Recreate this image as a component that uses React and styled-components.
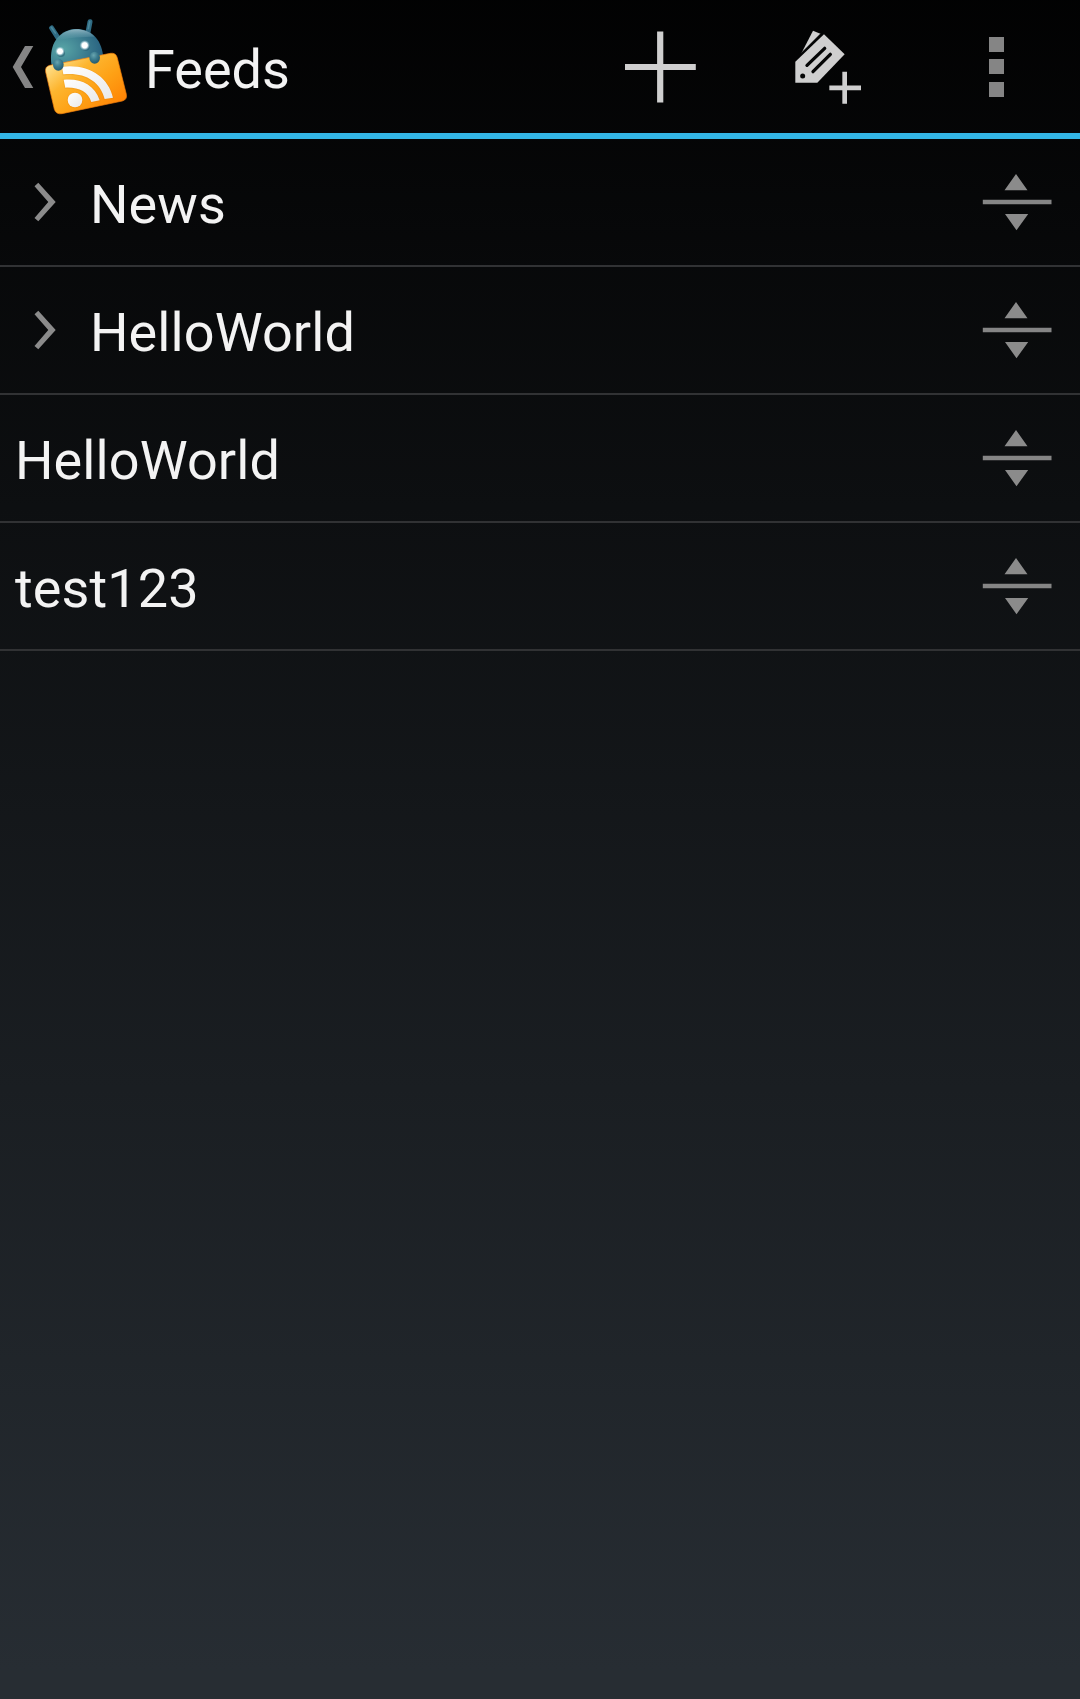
import React from 'react';
import styled, { createGlobalStyle } from 'styled-components';

const GlobalStyle = createGlobalStyle`
  * { box-sizing: border-box; }
  html, body { margin: 0; padding: 0; background: #000; }
`;

const Screen = styled.div`
  display: flex;
  flex-direction: column;
  width: 100%;
  height: 1699px;
  overflow: hidden;
  font-family: Roboto, 'Liberation Sans', sans-serif;
  color: #f3f3f3;
  background: linear-gradient(to bottom, #000 -75px, #272d33 1670px);
`;

const ActionBar = styled.header`
  display: flex;
  align-items: center;
  height: 139px;
  border-bottom: 6px solid #33b5e5;
`;

const HomeButton = styled.button`
  display: flex;
  align-items: center;
  gap: 7px;
  height: 133px;
  padding: 0 0 0 12px;
  border: 0;
  background: none;
`;

const Title = styled.h1`
  flex: 1;
  margin: 0;
  padding: 6px 0 0 12px;
  font-size: 54px;
  font-weight: 400;
  line-height: 64px;
`;

const Action = styled.button`
  display: flex;
  align-items: center;
  justify-content: center;
  width: ${(p) => p.$width}px;
  height: 133px;
  padding: 0;
  border: 0;
  background: none;
`;

const OverflowDots = styled.span`
  display: flex;
  flex-direction: column;
  justify-content: space-between;
  width: 15px;
  height: 60px;
`;

const Dot = styled.i`
  height: 15px;
  background: #858585;
`;

const FeedList = styled.ul`
  margin: 0;
  padding: 0;
  list-style: none;
`;

const Row = styled.li`
  display: flex;
  align-items: center;
  height: 128px;
  padding: 0 28px 0 ${(p) => (p.$folder ? 34 : 15)}px;
  border-bottom: 2px solid #313234;
`;

const Name = styled.span`
  flex: 1;
  padding: 5px 0 0 ${(p) => (p.$folder ? 34 : 0)}px;
  font-size: 54px;
  letter-spacing: 0.1px;
  line-height: 64px;
`;

const Icon = styled.svg`
  display: block;
  flex: none;
`;

const BackIcon = () => (
  <Icon width="22" height="44" viewBox="12 45 22 44">
    <path d="M25 46H33.3L21 67L33.3 88H25L12.7 67Z" fill="#858585" />
  </Icon>
);

const AppLogo = () => (
  <Icon width="92" height="133" viewBox="0 0 276 399">
    <defs>
      <linearGradient id="folder" x1="0" y1="0.05" x2="1" y2=".95">
        <stop offset="0" stopColor="#fff0ae" />
        <stop offset=".35" stopColor="#fdb52f" />
        <stop offset=".6" stopColor="#fea115" />
        <stop offset="1" stopColor="#ff7a00" />
      </linearGradient>
      <radialGradient id="head" cx=".22" cy=".5" r=".8">
        <stop offset="0" stopColor="#58a5a6" />
        <stop offset=".5" stopColor="#3f8192" />
        <stop offset="1" stopColor="#27607f" />
      </radialGradient>
      <linearGradient id="shine" x1="0" y1="0" x2="0" y2="1">
        <stop offset="0" stopColor="#b5d0d8" stopOpacity=".7" />
        <stop offset="1" stopColor="#6ba6b4" stopOpacity="0" />
      </linearGradient>
      <radialGradient id="hand" cx=".4" cy=".3" r=".7">
        <stop offset="0" stopColor="#68a5b0" />
        <stop offset=".5" stopColor="#3c7c8e" />
        <stop offset="1" stopColor="#245b6f" />
      </radialGradient>
      <radialGradient id="glow">
        <stop offset=".5" stopColor="#fff" />
        <stop offset=".68" stopColor="#d0e6ee" stopOpacity=".7" />
        <stop offset="1" stopColor="#7fb4c4" stopOpacity="0" />
      </radialGradient>
      <linearGradient id="wave" x1="0" y1="0" x2="1" y2="1">
        <stop offset="0" stopColor="#fff" />
        <stop offset="1" stopColor="#e9e9ea" />
      </linearGradient>
    </defs>
    <g transform="translate(-123 0)">
      <path d="M155 84L173 112M270 65L264 97" stroke="#2f6b83" strokeWidth="15" strokeLinecap="round" />
      <path d="M154 82L166 99M269 65L265 86" stroke="#4a879b" strokeWidth="5" strokeLinecap="round" />
      <path d="M154 192C148 145 165 100 215 88C262 80 302 108 309 165L290 182L170 210Z" fill="url(#head)" />
      <path d="M168 122C184 96 210 89 228 88C248 88 270 94 284 110C250 110 210 112 168 122Z" fill="url(#shine)" />
      <circle cx="183" cy="159" r="12" fill="#1f5268" opacity=".5" />
      <circle cx="257" cy="140" r="12" fill="#1f5268" opacity=".5" />
      <circle cx="180" cy="154" r="15" fill="url(#glow)" />
      <circle cx="254" cy="136" r="16" fill="url(#glow)" />
      <path d="M149 196L331 160Q348 157 352 174L379 283Q382 299 367 303L186 341Q168 344 163 328L137 216Q134 200 149 196Z" fill="url(#folder)" stroke="#f07b0c" strokeWidth="2" />
      <g stroke="#d97c10" strokeWidth="5" strokeOpacity=".22" fill="none">
        <circle cx="225" cy="301" r="22" />
        <path d="M191 240C240 235 283 253 299 302L274 306C264 276 236 262 196 264Z" />
        <path d="M186 201C265 191 325 231 339 294L314 297C301 243 251 217 190 224Z" />
      </g>
      <circle cx="225" cy="300" r="22" fill="url(#wave)" />
      <path d="M191 239C240 234 283 252 299 301L274 306C264 275 236 261 196 263Z" fill="url(#wave)" />
      <path d="M186 200C265 190 325 230 339 293L314 297C301 242 251 216 190 223Z" fill="url(#wave)" />
      <ellipse cx="175" cy="194" rx="16" ry="18" fill="url(#hand)" />
      <ellipse cx="284" cy="173" rx="16" ry="18" fill="url(#hand)" />
    </g>
  </Icon>
);

const PlusIcon = () => (
  <Icon width="72" height="72" viewBox="624.8 31 72 72">
    <path d="M624.8 67H695.6M660 31.6V102.4" stroke="#cfcfcf" strokeWidth="6.2" />
  </Icon>
);

const TagPlusIcon = () => (
  <Icon width="68" height="75" viewBox="555 27 204 225">
    <path d="M609 32L633 42L573 102Z" fill="#cfcfcf" />
    <path d="M573 102L633 42" stroke="#050606" strokeWidth="4" />
    <path d="M556 125L642 43L704 103L622 188H556Z" fill="#cfcfcf" />
    <path d="M591 136L644 85M609 155L661 103" stroke="#050606" strokeWidth="10" strokeLinecap="round" />
    <circle cx="578" cy="168" r="7.5" fill="#050606" />
    <path d="M658 203.5H753M704 155V251" stroke="#cfcfcf" strokeWidth="14" />
  </Icon>
);

const ExpandIcon = () => (
  <Icon width="22" height="40" viewBox="34 182 22 40">
    <path d="M38.3 182.8L55.7 202L38.3 221.2L34.5 218L48.3 202L34.5 186.3Z" fill="#8b8b8b" />
  </Icon>
);

const DragHandle = () => (
  <Icon width="70" height="58" viewBox="982 173 70 58">
    <path d="M1016 174L1027.5 190.3H1004.5ZM1005 214H1028.2L1016.5 230.3Z" fill="#8b8b8b" />
    <path d="M982.8 202H1051.5" stroke="#858585" strokeWidth="4.4" />
  </Icon>
);

const feeds = [
  { name: 'News', folder: true },
  { name: 'HelloWorld', folder: true },
  { name: 'HelloWorld', folder: false },
  { name: 'test123', folder: false },
];

export default function App() {
  return (
    <>
      <GlobalStyle />
      <Screen>
        <ActionBar>
          <HomeButton aria-label="Back">
            <BackIcon />
            <AppLogo />
          </HomeButton>
          <Title>Feeds</Title>
          <Action $width={168} aria-label="Add feed"><PlusIcon /></Action>
          <Action $width={168} aria-label="Add label"><TagPlusIcon /></Action>
          <Action $width={167} aria-label="More">
            <OverflowDots><Dot /><Dot /><Dot /></OverflowDots>
          </Action>
        </ActionBar>
        <FeedList>
          {feeds.map((feed, i) => (
            <Row key={i} $folder={feed.folder}>
              {feed.folder && <ExpandIcon />}
              <Name $folder={feed.folder}>{feed.name}</Name>
              <DragHandle />
            </Row>
          ))}
        </FeedList>
      </Screen>
    </>
  );
}
